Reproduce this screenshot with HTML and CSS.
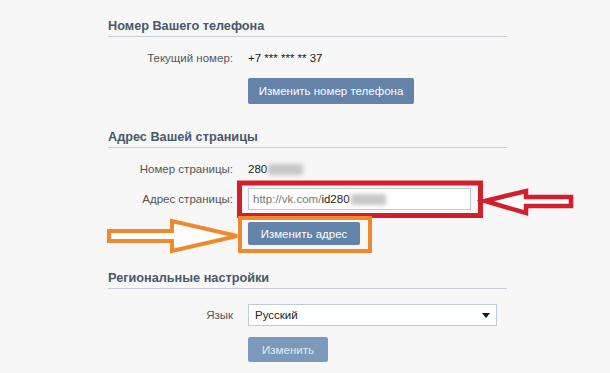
FILE: index.html
```html
<!DOCTYPE html>
<html lang="ru">
<head>
  <meta charset="UTF-8" />
  <title>Настройки</title>
  <link rel="stylesheet" href="styles.css">
</head>
<body>
  <div class="page">

    <div class="section">
      <h2 class="section-title">Номер Вашего телефона</h2>
      <div class="row">
        <div class="label">Текущий номер:</div>
        <div class="value">+7 *** *** ** 37</div>
      </div>
      <div class="row row-btn">
        <div class="label"></div>
        <button class="btn btn-wide">Изменить номер телефона</button>
      </div>
    </div>

    <div class="section">
      <h2 class="section-title">Адрес Вашей страницы</h2>
      <div class="row">
        <div class="label">Номер страницы:</div>
        <div class="value">280<span class="blur"></span></div>
      </div>
      <div class="row row-input">
        <div class="label">Адрес страницы:</div>
        <div class="text-input"><span class="prefix">http://vk.com/</span>id280<span class="blur"></span></div>
      </div>
      <div class="row row-btn2">
        <div class="label"></div>
        <button class="btn btn-addr">Изменить адрес</button>
      </div>
    </div>

    <div class="section">
      <h2 class="section-title">Региональные настройки</h2>
      <div class="row row-select">
        <div class="label">Язык</div>
        <div class="select">Русский<span class="caret"></span></div>
      </div>
      <div class="row row-btn3">
        <div class="label"></div>
        <button class="btn btn-dim">Изменить</button>
      </div>
    </div>

  </div>

  <svg class="marks" width="610" height="373" viewBox="0 0 610 373">
    <rect x="239.5" y="183" width="241" height="32.5" fill="none" stroke="#d21f2b" stroke-width="5"/>
    <polygon points="485,201 526,191 526,197 571,197 571,206 526,206 526,213" fill="#fff" stroke="#d21f2b" stroke-width="4.5" stroke-linejoin="miter"/>
    <rect x="240" y="218" width="130" height="33" fill="none" stroke="#f0882e" stroke-width="4"/>
    <polygon points="109,231 172,231 172,221 237,236 172,251 172,241 109,241" fill="#fff" stroke="#f0882e" stroke-width="4" stroke-linejoin="miter"/>
  </svg>
</body>
</html>
```

FILE: styles.css
```css
* {
  box-sizing: border-box;
  margin: 0;
  padding: 0;
}

body {
  font-family: "Liberation Sans", Arial, sans-serif;
  font-size: 11.5px;
  background-color: #f7f7f7;
  color: #222;
  width: 610px;
  height: 373px;
  overflow: hidden;
  position: relative;
}

.page {
  width: 399px;
  margin-left: 108px;
  padding-top: 18px;
}

.section-title {
  font-size: 12.7px;
  font-weight: bold;
  line-height: 16px;
  color: #48586d;
  padding-bottom: 2px;
  border-bottom: 1px solid #c9ced6;
}

.section + .section {
  margin-top: 25px;
}

.row {
  display: flex;
  align-items: center;
  gap: 15px;
  margin-top: 13px;
  line-height: 16px;
}

.label {
  width: 125px;
  text-align: right;
  color: #555;
  flex-shrink: 0;
}

.value {
  color: #222;
  display: flex;
  align-items: center;
}

.blur {
  display: inline-block;
  width: 35px;
  height: 11px;
  background-color: #c6c6c6;
  filter: blur(2px);
  margin-left: 1px;
}

.row-btn {
  margin-top: 12px;
}

.btn {
  font-family: "Liberation Sans", Arial, sans-serif;
  font-size: 11.5px;
  color: #fff;
  background-color: #6383a8;
  border: none;
  border-radius: 2px;
  height: 26px;
  padding: 0;
  white-space: nowrap;
}

.btn-wide {
  width: 166px;
}

.row-input {
  margin-top: 11px;
}

.text-input {
  width: 223px;
  height: 22px;
  border: 1px solid #c0cad5;
  background-color: #fff;
  padding: 0 4px;
  display: flex;
  align-items: center;
  color: #222;
}

.text-input .prefix {
  color: #777;
}

.row-btn2 {
  margin-top: 12px;
}

.btn-addr {
  width: 112px;
  height: 23px;
}

.row-select {
  margin-top: 15px;
}

.select {
  width: 249px;
  height: 22px;
  border: 1px solid #c0cad5;
  background-color: #fff;
  padding: 0 6px;
  display: flex;
  align-items: center;
  justify-content: space-between;
  color: #222;
}

.caret {
  width: 0;
  height: 0;
  border-left: 4px solid transparent;
  border-right: 4px solid transparent;
  border-top: 5px solid #111;
}

.row-btn3 {
  margin-top: 11px;
}

.btn-dim {
  width: 80px;
  height: 25px;
  background-color: #7c99bb;
  color: #e4eaf1;
}

.marks {
  position: absolute;
  top: 0;
  left: 0;
}
```
